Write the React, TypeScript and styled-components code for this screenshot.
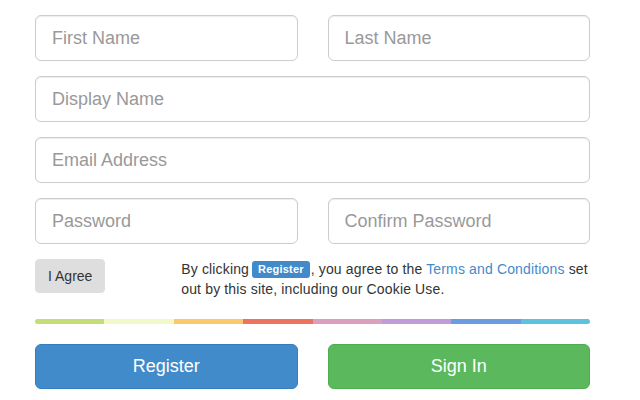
import styled, { createGlobalStyle } from "styled-components";

const GlobalStyle = createGlobalStyle`
    body {
        margin: 0;
        background: #fff;
        font-family: "Liberation Sans", Arial, sans-serif;
        font-size: 14px;
        line-height: 1.42857;
        color: #333;
    }
`;

const barColors = ["#c4dd79", "#f3f8c9", "#fac96b", "#ec735f", "#dba0bd", "#c09bd9", "#6c9ce0", "#5fc2dd"];

export default function App() {
    return (
        <>
            <GlobalStyle />
            <Form>
                <Row>
                    <Input placeholder="First Name" />
                    <Input placeholder="Last Name" />
                </Row>
                <Input placeholder="Display Name" />
                <Input placeholder="Email Address" />
                <Row>
                    <Input type="password" placeholder="Password" />
                    <Input type="password" placeholder="Confirm Password" />
                </Row>

                <AgreeRow>
                    <AgreeButton type="button">I Agree</AgreeButton>
                    <Terms>
                        <span>By clicking</span> <Label>Register</Label>
                        <span>, you agree to the</span> <Link href="#">Terms and Conditions</Link>{" "}
                        <span>set</span> <span>out by this site, including our Cookie Use.</span>
                    </Terms>
                </AgreeRow>

                <ColorBar>
                    {barColors.map((c) => (
                        <Segment key={c} $color={c} />
                    ))}
                </ColorBar>

                <Row>
                    <BigButton type="button" $bg="#428bca" $border="#357ebd">Register</BigButton>
                    <BigButton type="button" $bg="#5cb85c" $border="#4cae4c">Sign In</BigButton>
                </Row>
            </Form>
        </>
    );
}

const Form = styled.form`
    width: 555px;
    padding: 15px 35px;
    display: flex;
    flex-direction: column;
    gap: 15px;
`;

const Row = styled.div`
    display: grid;
    grid-template-columns: 1fr 1fr;
    gap: 30px;
`;

const Input = styled.input`
    box-sizing: border-box;
    width: 100%;
    height: 46px;
    padding: 10px 16px;
    font-family: inherit;
    font-size: 18px;
    color: #555;
    border: 1px solid #ccc;
    border-radius: 6px;
    box-shadow: inset 0 1px 1px rgba(0, 0, 0, 0.075);
    outline: none;

    &::placeholder {
        color: #999;
    }
`;

const AgreeRow = styled.div`
    display: grid;
    grid-template-columns: 116.25px 1fr;
    gap: 30px;
    align-items: start;
`;

const AgreeButton = styled.button`
    justify-self: start;
    height: 34px;
    padding: 6px 12px;
    font-family: inherit;
    font-size: 14px;
    color: #333;
    background: #dedede;
    border: 1px solid #dedede;
    border-radius: 4px;
`;

const Terms = styled.p`
    margin: 0;
    line-height: 20px;
    letter-spacing: 0.15px;
    color: #333;
`;

const Label = styled.span`
    display: inline-block;
    margin: 0 1px 0 -1px;
    padding: 3px 6px 3px;
    font-size: 11px;
    font-weight: bold;
    line-height: 11px;
    letter-spacing: 0.2px;
    color: #fff;
    background: #428bca;
    border-radius: 3px;
    vertical-align: 1px;
`;

const Link = styled.a`
    color: #428bca;
    text-decoration: none;
`;

const ColorBar = styled.div`
    display: flex;
    height: 5px;
    margin: 5px 0;
    border-radius: 3px;
    overflow: hidden;
`;

const Segment = styled.div<{ $color: string }>`
    flex: 1;
    background: ${(p) => p.$color};
`;

const BigButton = styled.button<{ $bg: string; $border: string }>`
    height: 45px;
    padding: 10px 16px;
    font-family: inherit;
    font-size: 18px;
    line-height: 1.33;
    color: #fff;
    background: ${(p) => p.$bg};
    border: 1px solid ${(p) => p.$border};
    border-radius: 6px;
`;
